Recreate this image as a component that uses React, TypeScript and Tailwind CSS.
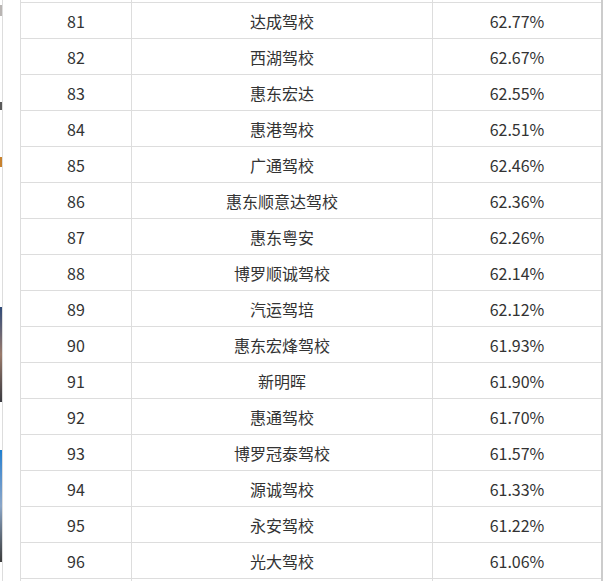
import React from 'react';

const rows: [number, string, string][] = [
    [81, '达成驾校', '62.77%'],
    [82, '西湖驾校', '62.67%'],
    [83, '惠东宏达', '62.55%'],
    [84, '惠港驾校', '62.51%'],
    [85, '广通驾校', '62.46%'],
    [86, '惠东顺意达驾校', '62.36%'],
    [87, '惠东粤安', '62.26%'],
    [88, '博罗顺诚驾校', '62.14%'],
    [89, '汽运驾培', '62.12%'],
    [90, '惠东宏烽驾校', '61.93%'],
    [91, '新明晖', '61.90%'],
    [92, '惠通驾校', '61.70%'],
    [93, '博罗冠泰驾校', '61.57%'],
    [94, '源诚驾校', '61.33%'],
    [95, '永安驾校', '61.22%'],
    [96, '光大驾校', '61.06%'],
];

const Spacer: React.FC<{ h: string; bottom?: boolean }> = ({ h, bottom }) => (
    <div className={`flex ${h} ${bottom ? 'border-b border-[#dddddd]' : ''}`}>
        <div className="w-[111px] border-r border-[#dddddd]" />
        <div className="w-[301px] border-r border-[#dddddd]" />
        <div className="flex-1" />
    </div>
);

export default function App() {
    return (
        <div
            className="flex w-[613px] h-[581px] overflow-hidden bg-white text-[#333333]"
            style={{ fontFamily: '"Noto Sans CJK SC", "Noto Sans", sans-serif' }}
        >
            {/* edge of the neighbouring column */}
            <div className="flex flex-col w-[3px] border-r border-[#dddddd]">
                <div className="h-[5px]" />
                <div className="h-[11px] bg-[#b9b5b3]" />
                <div className="h-[86px]" />
                <div className="h-[8px] bg-[#5a5a5a]" />
                <div className="h-[47px]" />
                <div className="h-[10px] bg-[#c8822e]" />
                <div className="h-[140px]" />
                <div className="h-[95px] bg-gradient-to-b from-[#2f4a78] via-[#9a7a6a] to-[#3a3a40]" />
                <div className="h-[48px]" />
                <div className="h-[112px] bg-gradient-to-b from-[#1a7fd0] via-[#8aa6c8] to-[#3c3c3c]" />
            </div>

            <div className="ml-[17px] w-[583px] border-l border-r-2 border-l-[#dddddd] border-r-[#cccccc] text-[16px]">
                <Spacer h="h-[3px]" bottom />
                {rows.map(([rank, name, rate]) => (
                    <div key={rank} className="flex h-[36px] border-b border-[#dddddd]">
                        <div className="w-[111px] border-r border-[#dddddd] flex items-center justify-center">
                            {rank}
                        </div>
                        <div className="w-[301px] border-r border-[#dddddd] flex items-center justify-center">
                            {name}
                        </div>
                        <div className="flex-1 flex items-center justify-center">{rate}</div>
                    </div>
                ))}
                <Spacer h="h-[3px]" />
            </div>
        </div>
    );
}
